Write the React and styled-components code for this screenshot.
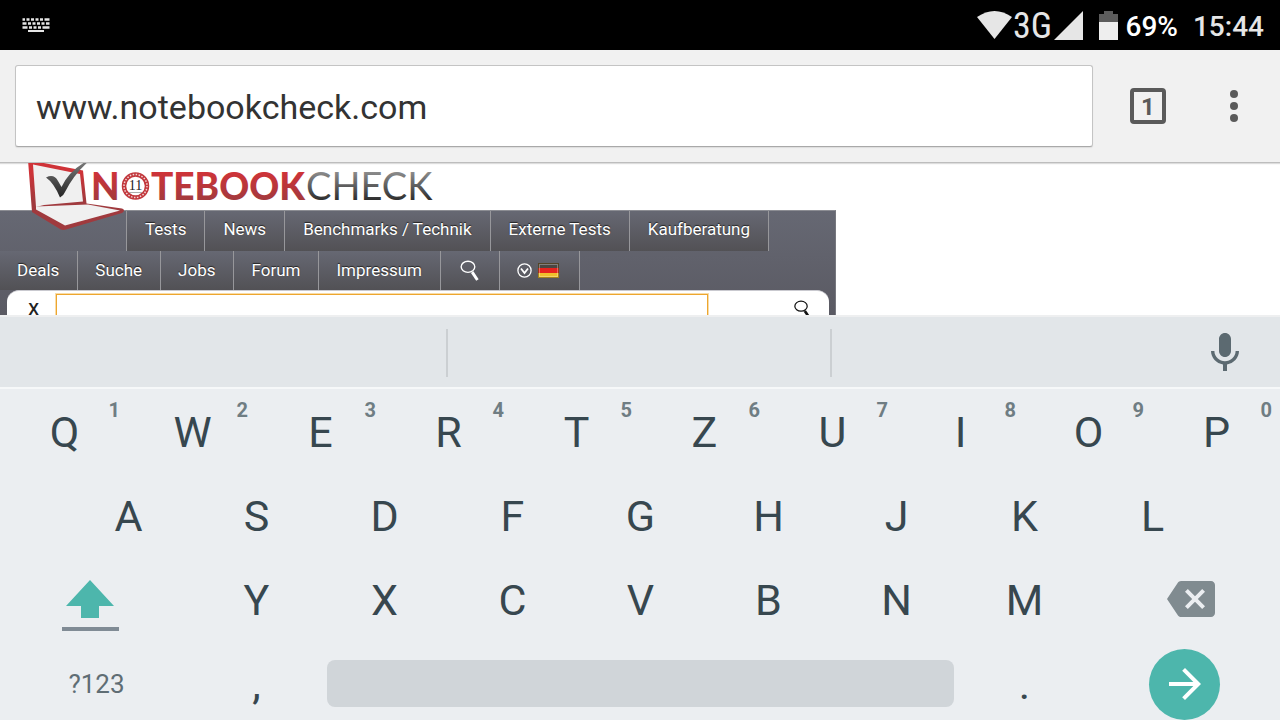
import styled, { createGlobalStyle } from "styled-components";
import { MdArrowForward, MdBackspace } from "react-icons/md";

const GlobalStyle = createGlobalStyle`
  * { box-sizing: border-box; }
  body {
    margin: 0;
    background: #fff;
    font-family: Roboto, "Liberation Sans", sans-serif;
    overflow: hidden;
  }
  button, input { font-family: inherit; }
  button { border: none; padding: 0; background: none; cursor: pointer; }
  svg { display: block; flex: none; }
`;

/* ---------- screen ---------- */

const Screen = styled.div`
  height: 100vh;
  display: flex;
  flex-direction: column;
  overflow: hidden;
`;

/* ---------- status bar ---------- */

const StatusBar = styled.header`
  flex: none;
  height: 50px;
  padding: 0 16px 0 22px;
  background: #000;
  display: flex;
  align-items: center;
  justify-content: space-between;
`;

const StatusIcons = styled.div`
  display: flex;
  align-items: center;
  color: #e6e6e6;
`;

const Network = styled.span`
  width: 42px;
  padding-top: 2px;
  font-family: "Roboto Condensed", "Noto Sans", sans-serif;
  font-size: 36px;
  font-weight: 400;
  line-height: 48px;
  text-align: center;
`;

const Battery = styled.svg`
  margin: 0 8px 0 16px;
`;

const StatusText = styled.span`
  padding-top: 4px;
  font-size: 28px;
  font-weight: 500;
  line-height: 46px;
  color: ${(p) => p.$color};
  margin-right: ${(p) => p.$gap || 0}px;
`;

/* ---------- browser toolbar ---------- */

const Toolbar = styled.div`
  flex: none;
  position: relative;
  height: 113px;
  padding: 15px 30px 15px 15px;
  background: #f1f1f1;
  border-bottom: 1px solid #bdbdbd;
  box-shadow: 0 1px 1px #ddd;
  display: flex;
  align-items: center;
`;

const UrlInput = styled.input`
  flex: 1;
  min-width: 0;
  height: 82px;
  padding: 2px 20px 0;
  border: 1px solid #c4c4c4;
  border-bottom-color: #a9a9a9;
  border-radius: 3px;
  background: #fff;
  box-shadow: 0 1px 1px #ddd;
  color: #333;
  font-size: 34px;
  outline: none;
`;

const TabButton = styled.button`
  width: 36px;
  height: 36px;
  margin: 0 52px 0 37px;
  border: 4px solid #5a5a5a;
  border-radius: 4px;
  color: #5a5a5a;
  font-size: 24px;
  font-weight: 700;
  line-height: 30px;
`;

const MenuButton = styled.button`
  width: 32px;
  height: 48px;
  display: flex;
  align-items: center;
  justify-content: center;
`;

/* ---------- web page ---------- */

const Page = styled.main`
  flex: none;
  height: 152px;
  overflow: hidden;
  background: #fff;
`;

const Site = styled.div`
  position: relative;
  max-width: 836px;
  padding-top: 47px;
`;

const LogoLink = styled.a`
  position: absolute;
  top: 0;
  left: 28px;
`;

const NavArea = styled.div`
  border-top: 1px solid #8c8d93;
  border-right: 1px solid #77787f;
  background: linear-gradient(#666873, #56555d);
`;

const NavRow = styled.nav`
  height: ${(p) => p.$height}px;
  padding-left: ${(p) => p.$indent || 0}px;
  display: flex;
`;

const NavItem = styled.a`
  display: flex;
  align-items: center;
  gap: 6px;
  padding: ${(p) => (p.$edge ? "0 18px 4px" : "0 18px 1px 17px")};
  border-right: 1px solid #97979b;
  background: linear-gradient(#666873, #525155);
  color: #fff;
  font-size: 17px;
  text-decoration: none;
  text-shadow: 0 -1px 1px #222;
  &:first-child {
    border-left: ${(p) => (p.$edge ? "1px solid #97979b" : "none")};
  }
`;

const IconItem = styled(NavItem)`
  padding: 0 20px 1px 17px;
`;

const SearchRow = styled.form`
  height: 60px;
  margin: 0 6px 0 7px;
  padding: 3px 18px 0;
  display: flex;
  align-items: flex-start;
  background: #fff;
  border-top: 1px solid #c9c9cf;
  border-radius: 12px;
`;

const CloseButton = styled.button`
  width: 17px;
  margin: 5px 14px 0 0;
  color: #222;
  font-size: 17px;
  font-weight: 500;
  line-height: 20px;
`;

const SearchInput = styled.input`
  flex: 1;
  max-width: 652px;
  height: 44px;
  border: 1px solid #eda62f;
  box-shadow: 0 0 0 1px #f8dca8;
  outline: none;
`;

const SearchButton = styled.button`
  margin: 6px 0 0 auto;
`;

/* ---------- keyboard ---------- */

const Keyboard = styled.section`
  flex: 1;
  min-height: 0;
  background: #ebeef1;
  border-top: 2px solid #eeeff0;
`;

const Suggestions = styled.div`
  height: 72px;
  padding: 12px 0 10px;
  background: #e2e6e9;
  border-bottom: 2px solid #f6f8f9;
  display: flex;
`;

const Suggestion = styled.div`
  width: ${(p) => p.$width}%;
  border-right: ${(p) => (p.$last ? "none" : "2px solid #cbcfd2")};
  display: flex;
  align-items: flex-start;
  justify-content: flex-end;
  padding-right: 31px;
`;

const KeyRow = styled.div`
  height: 84px;
  display: flex;
  justify-content: center;
`;

const Key = styled.button`
  position: relative;
  width: ${(p) => p.$width || 10}%;
  padding: 2px 0 0 1px;
  display: flex;
  align-items: center;
  justify-content: center;
  color: ${(p) => (p.$small ? "#5f6d74" : "#37474f")};
  font-size: ${(p) => (p.$small ? 26 : 43)}px;
`;

const Hint = styled.span`
  position: absolute;
  top: 9px;
  right: 8px;
  color: #6f7d83;
  font-size: 20px;
  font-weight: 700;
  line-height: 24px;
`;

const ShiftKey = styled(Key)`
  padding: 14px 11px 0 0;
`;

const DeleteKey = styled(Key)`
  padding: 0 0 0 14px;
  color: #808b90;
`;

const SpaceKey = styled(Key)`
  padding: 0 6px 0 7px;
  &::before {
    content: "";
    flex: 1;
    height: 47px;
    border-radius: 8px;
    background: #d0d5d9;
  }
`;

const EnterCircle = styled.span`
  width: 71px;
  height: 71px;
  border-radius: 50%;
  background: #4db6ac;
  color: #fff;
  display: flex;
  align-items: center;
  justify-content: center;
`;

/* ---------- drawings ---------- */

function KeyboardIcon() {
  return (
    <svg width="28" height="15" viewBox="0 0 28 15" fill="none" stroke="#e6e6e6">
      <path strokeWidth="2.600" d="M0.500 1.500h27" strokeDasharray="2.500 1.500 3 1.500 3 1.500 3 1.500 3 1.500 5 9" />
      <path strokeWidth="2.600" d="M0.500 5.500h27" strokeDasharray="4 1.500 3 1.500 3 1.500 3 1.500 3 1.500 4 9" />
      <path strokeWidth="2.600" d="M0.500 9.500h27" strokeDasharray="5 1.500 3 1.500 3 1.500 3 1.500 7 9" />
      <path strokeWidth="2" d="M6 13h16" />
    </svg>
  );
}

function Logo() {
  return (
    <svg width="410" height="70" viewBox="28 163 410 70">
      <defs>
        <linearGradient id="red" gradientUnits="userSpaceOnUse" x1="0" y1="172" x2="0" y2="202">
          <stop offset="0" stopColor="#cf3338" />
          <stop offset="1" stopColor="#a03a3e" />
        </linearGradient>
        <linearGradient id="grey" gradientUnits="userSpaceOnUse" x1="0" y1="172" x2="0" y2="201">
          <stop offset="0" stopColor="#8c8c8c" />
          <stop offset="1" stopColor="#2b2b2b" />
        </linearGradient>
        <linearGradient id="tick" gradientUnits="userSpaceOnUse" x1="0" y1="163" x2="0" y2="197">
          <stop offset="0" stopColor="#777" />
          <stop offset="1" stopColor="#262626" />
        </linearGradient>
      </defs>
      <path d="M28 160L83 170.500L86.500 203.500L122 208.500Q126 210 122 213L66 229.500Q63 230.500 60 229L32 212Z" fill="url(#red)" />
      <path d="M33 164.500L80 174L83 201.500L44 205L36 207Z" fill="#f0f0f0" />
      <path d="M36 206.500L88 204.500L120 210.500L65 225.500L36 209.500Z" fill="#f0f0f0" />
      <path d="M46 177.500Q54 173.500 58 181L61.500 187Q69 171 86 161.500L90 160Q74 174 65 192Q64 195 60 197.500Q54 183 46 177.500Z" fill="url(#tick)" />
      <g fontFamily="Lato, sans-serif">
        <g fill="url(#red)" fontSize="37" fontWeight="900">
          <text x="91" y="200">N</text>
          <text x="151" y="200">TEBOOK</text>
        </g>
        <text x="306" y="200" fontSize="38" fill="url(#grey)">CHECK</text>
      </g>
      <circle cx="135.500" cy="186" r="11.500" fill="#fff" stroke="#c2383d" strokeWidth="4.500" />
      <circle cx="135.500" cy="186" r="11.500" fill="none" stroke="#f3d5d6" strokeWidth="1.500" strokeDasharray="1.500 1.500" />
      <text x="135.500" y="190" textAnchor="middle" fontFamily="Liberation Serif, serif" fontSize="14" fill="#222">11</text>
      <path d="M129 192.500h13" stroke="#999" strokeWidth="0.800" />
    </svg>
  );
}

function Magnifier({ size, color }) {
  return (
    <svg width={size} height={size} viewBox="-2 0 20 20" fill="none" stroke={color}>
      <ellipse cx="7.500" cy="6.500" rx="6.500" ry="5.300" strokeWidth="1.300" />
      <path d="M11.500 11.500L16.500 19" strokeWidth="2.800" />
    </svg>
  );
}

function Flag() {
  return (
    <svg width="21" height="15" viewBox="0 0 21 15">
      <rect width="21" height="5" fill="#4b4742" />
      <rect y="5" width="21" height="5" fill="#e5231e" />
      <rect y="10" width="21" height="5" fill="#eec02c" />
      <rect x="1.500" y="1.500" width="18" height="12" fill="none" stroke="#fff" strokeOpacity="0.300" />
      <rect x="0.500" y="0.500" width="20" height="14" fill="none" stroke="#5a4410" strokeOpacity="0.500" />
    </svg>
  );
}

const mainLinks = ["Tests", "News", "Benchmarks / Technik", "Externe Tests", "Kaufberatung"];
const subLinks = ["Deals", "Suche", "Jobs", "Forum", "Impressum"];

export default function App() {
  return (
    <Screen>
      <GlobalStyle />
      <StatusBar>
        <KeyboardIcon />
        <StatusIcons>
          <svg width="35" height="28" viewBox="0 0 35 28" fill="currentColor">
            <path d="M0 6Q17.500 -6 35 6L17.500 28Z" />
          </svg>
          <Network>3G</Network>
          <svg width="29" height="29" viewBox="0 0 29 29" fill="currentColor">
            <path d="M29 0V29H0Z" />
          </svg>
          <Battery width="19" height="29" viewBox="0 0 19 29">
            <path d="M5 0h9v3h5v8H0V3h5z" fill="#5c5c5c" />
            <path d="M0 11h19v18H0z" fill="#eee" />
          </Battery>
          <StatusText $color="#fff" $gap={15}>69%</StatusText>
          <StatusText $color="#e6e6e6">15:44</StatusText>
        </StatusIcons>
      </StatusBar>

      <Toolbar>
        <UrlInput aria-label="Address" defaultValue="www.notebookcheck.com" />
        <TabButton aria-label="Open tabs">1</TabButton>
        <MenuButton aria-label="Menu">
          <svg width="8" height="32" viewBox="0 0 8 32" fill="#5a5a5a">
            <circle cx="4" cy="4" r="4" />
            <circle cx="4" cy="16" r="4" />
            <circle cx="4" cy="28" r="4" />
          </svg>
        </MenuButton>
      </Toolbar>

      <Page>
        <Site>
          <NavArea>
            <NavRow $height={40} $indent={126}>
              {mainLinks.map((label) => (
                <NavItem key={label} href="#" $edge>{label}</NavItem>
              ))}
            </NavRow>
            <NavRow $height={39}>
              {subLinks.map((label) => (
                <NavItem key={label} href="#">{label}</NavItem>
              ))}
              <IconItem href="#" aria-label="Search">
                <Magnifier size={21} color="#fff" />
              </IconItem>
              <IconItem href="#" aria-label="Language">
                <svg width="15" height="15" viewBox="0 0 15 15" fill="none" stroke="#fff">
                  <circle cx="7.500" cy="7.500" r="6.600" strokeWidth="1.300" />
                  <path d="M4 5.500L7.500 10L11 5.500" strokeWidth="1.800" />
                </svg>
                <Flag />
              </IconItem>
            </NavRow>
            <SearchRow onSubmit={(e) => e.preventDefault()}>
              <CloseButton type="button">X</CloseButton>
              <SearchInput aria-label="Search term" />
              <SearchButton aria-label="Search">
                <Magnifier size={19} color="#111" />
              </SearchButton>
            </SearchRow>
          </NavArea>
          <LogoLink href="#" aria-label="Notebookcheck">
            <Logo />
          </LogoLink>
        </Site>
      </Page>

      <Keyboard>
        <Suggestions>
          <Suggestion $width={35} />
          <Suggestion $width={30} />
          <Suggestion $width={35} $last>
            <button aria-label="Voice input">
              <svg width="48" height="44" viewBox="0 1 24 22" fill="#5c6a71">
                <path d="M12 15c1.660 0 3-1.340 3-3V6c0-1.660-1.340-3-3-3S9 4.340 9 6v6c0 1.660 1.340 3 3 3zm5.300-3c0 3-2.540 5.100-5.300 5.100S6.700 15 6.700 12H5c0 3.420 2.720 6.230 6 6.720V22h2v-3.280c3.280-.48 6-3.300 6-6.720h-1.700z" />
              </svg>
            </button>
          </Suggestion>
        </Suggestions>
        <KeyRow>
          {"QWERTZUIOP".split("").map((letter, i) => (
            <Key key={letter}>
              {letter}
              <Hint>{(i + 1) % 10}</Hint>
            </Key>
          ))}
        </KeyRow>
        <KeyRow>
          {"ASDFGHJKL".split("").map((letter) => (
            <Key key={letter}>{letter}</Key>
          ))}
        </KeyRow>
        <KeyRow>
          <ShiftKey $width={15} aria-label="Shift">
            <svg width="57" height="52" viewBox="0 0 57 52">
              <path d="M28 0L52 26H37V38H19V26H4Z" fill="#4db6ac" />
              <path d="M0 47h57v4H0z" fill="#808b95" />
            </svg>
          </ShiftKey>
          {"YXCVBNM".split("").map((letter) => (
            <Key key={letter}>{letter}</Key>
          ))}
          <DeleteKey $width={15} aria-label="Delete">
            <MdBackspace size={48} />
          </DeleteKey>
        </KeyRow>
        <KeyRow>
          <Key $width={15} $small>?123</Key>
          <Key>,</Key>
          <SpaceKey $width={50} aria-label="Space" />
          <Key>.</Key>
          <Key $width={15} aria-label="Go">
            <EnterCircle>
              <MdArrowForward size={48} />
            </EnterCircle>
          </Key>
        </KeyRow>
      </Keyboard>
    </Screen>
  );
}
